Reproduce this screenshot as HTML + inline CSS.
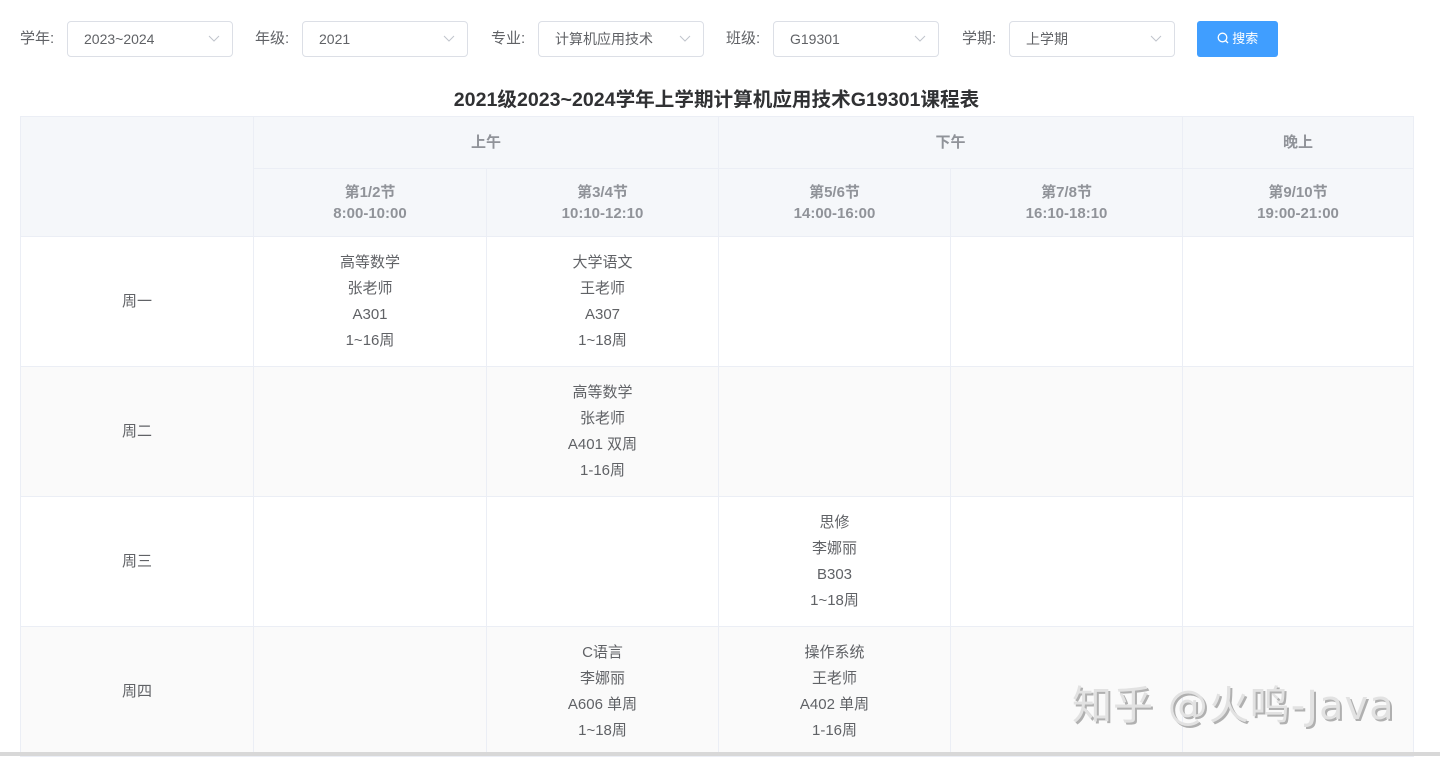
<!DOCTYPE html>
<html><head><meta charset="utf-8"><style>
*{box-sizing:border-box;margin:0;padding:0}
body{width:1440px;height:756px;overflow:hidden;background:#fff;font-family:"Liberation Sans","Noto Sans CJK SC",sans-serif;color:#606266;position:relative}
.lbl{position:absolute;top:21px;line-height:36px;font-size:15px;color:#606266}
.sel{position:absolute;top:21px;width:166px;height:36px;border:1px solid #dcdfe6;border-radius:4px;line-height:34px;padding-left:16px;font-size:14px;color:#606266}
.sel svg{position:absolute;right:12px;top:13px}
.btn{position:absolute;left:1197px;top:21px;width:81px;height:36px;background:#409eff;border-radius:3px;color:#fff;font-size:13px;line-height:36px;text-align:center}
h1{position:absolute;top:83px;left:0;width:1433px;text-align:center;font-size:19.6px;font-weight:bold;color:#303133}
table{position:absolute;left:20px;top:116px;border-collapse:collapse;width:1393px;table-layout:fixed}
td,th{border:1px solid #ebeef5;text-align:center;font-size:15px;line-height:26px}
th{background:#f5f7fa;color:#909399;font-weight:bold;font-size:15px;line-height:21px}
tr.g td{background:#fafafa}
.wm{position:absolute;left:1072px;top:673px;font-size:40px;color:#e2e2e2;text-shadow:2px 2px 0 #b0b0b0;letter-spacing:1px;font-family:"DejaVu Sans","Noto Sans CJK SC",sans-serif;font-weight:normal}
.bot{position:absolute;left:0;top:752px;width:1440px;height:4px;background:#d8d8d8}
</style></head><body>
<div class="lbl" style="left:20px">学年:</div>
<div class="sel" style="left:67px">2023~2024<svg width="12" height="8"><path d="M1 1l5 5 5-5" stroke="#c0c4cc" fill="none"/></svg></div>
<div class="lbl" style="left:255px">年级:</div>
<div class="sel" style="left:302px">2021<svg width="12" height="8"><path d="M1 1l5 5 5-5" stroke="#c0c4cc" fill="none"/></svg></div>
<div class="lbl" style="left:491px">专业:</div>
<div class="sel" style="left:538px">计算机应用技术<svg width="12" height="8"><path d="M1 1l5 5 5-5" stroke="#c0c4cc" fill="none"/></svg></div>
<div class="lbl" style="left:726px">班级:</div>
<div class="sel" style="left:773px">G19301<svg width="12" height="8"><path d="M1 1l5 5 5-5" stroke="#c0c4cc" fill="none"/></svg></div>
<div class="lbl" style="left:962px">学期:</div>
<div class="sel" style="left:1009px">上学期<svg width="12" height="8"><path d="M1 1l5 5 5-5" stroke="#c0c4cc" fill="none"/></svg></div>
<div class="btn"><svg width="12" height="12" style="vertical-align:-1px"><circle cx="5.5" cy="5.5" r="4.3" stroke="#fff" fill="none" stroke-width="1.3"/><path d="M8.5 8.5l2.5 2.5" stroke="#fff" stroke-width="1.3"/></svg> 搜索</div>
<h1>2021级2023~2024学年上学期计算机应用技术G19301课程表</h1>
<table>
<colgroup><col style="width:233px"><col style="width:233px"><col style="width:232px"><col style="width:232px"><col style="width:232px"><col style="width:231px"></colgroup>
<tr style="height:52px"><th rowspan="2"></th><th colspan="2">上午</th><th colspan="2">下午</th><th>晚上</th></tr>
<tr style="height:68px"><th>第1/2节<br>8:00-10:00</th><th>第3/4节<br>10:10-12:10</th><th>第5/6节<br>14:00-16:00</th><th>第7/8节<br>16:10-18:10</th><th>第9/10节<br>19:00-21:00</th></tr>
<tr style="height:130px"><td>周一</td><td>高等数学<br>张老师<br>A301<br>1~16周</td><td>大学语文<br>王老师<br>A307<br>1~18周</td><td></td><td></td><td></td></tr>
<tr class="g" style="height:130px"><td>周二</td><td></td><td>高等数学<br>张老师<br>A401 双周<br>1-16周</td><td></td><td></td><td></td></tr>
<tr style="height:130px"><td>周三</td><td></td><td></td><td>思修<br>李娜丽<br>B303<br>1~18周</td><td></td><td></td></tr>
<tr class="g" style="height:130px"><td>周四</td><td></td><td>C语言<br>李娜丽<br>A606 单周<br>1~18周</td><td>操作系统<br>王老师<br>A402 单周<br>1-16周</td><td></td><td></td></tr>
</table>
<div class="wm">知乎 @火鸣-Java</div>
<div class="bot"></div>
</body></html>
